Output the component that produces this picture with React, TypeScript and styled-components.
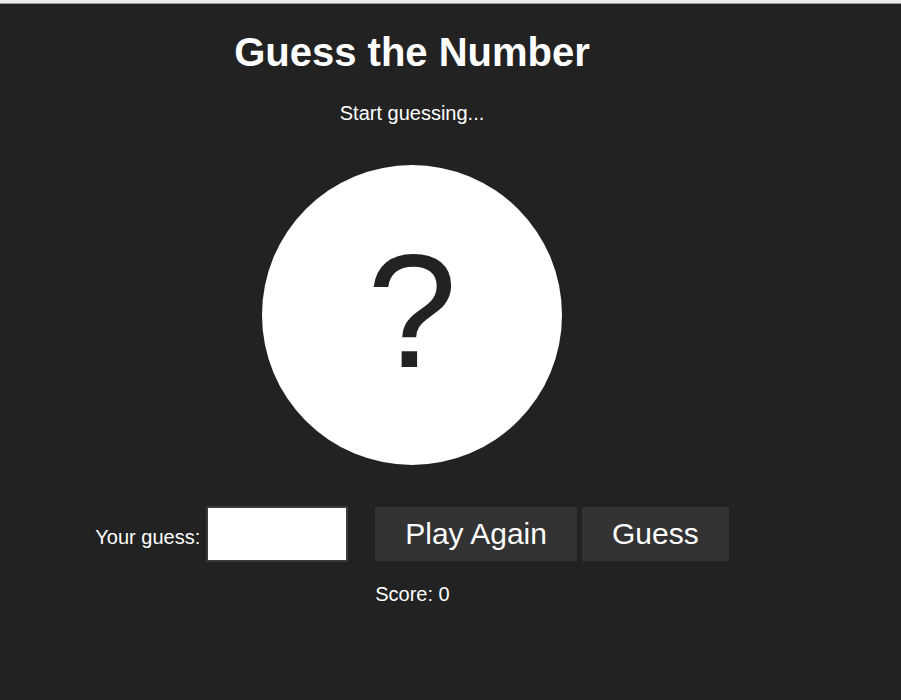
import React from "react";
import styled, { createGlobalStyle } from "styled-components";

const Global = createGlobalStyle`
  html, body {
    margin: 0;
    padding: 0;
    background: #222222;
    font-family: "Liberation Sans", Arial, sans-serif;
    color: #ffffff;
  }
`;

const TopBar = styled.div`
  height: 3px;
  background: #ececec;
  border-bottom: 1px solid #9a9a9a;
`;

const Page = styled.main`
  width: 824px;
  min-height: 696px;
  display: flex;
  flex-direction: column;
  align-items: center;
`;

const Title = styled.h1`
  margin: 25px 0 0;
  font-size: 40px;
  font-weight: bold;
  line-height: 46px;
`;

const Status = styled.p`
  margin: 26px 0 0;
  font-size: 20px;
  line-height: 24px;
`;

const Ball = styled.div`
  margin-top: 40px;
  box-sizing: border-box;
  width: 300px;
  height: 300px;
  padding-bottom: 9px;
  border-radius: 50%;
  background: #ffffff;
  color: #222222;
  display: flex;
  align-items: center;
  justify-content: center;
  font-size: 162px;
  line-height: 1;
`;

const Controls = styled.div`
  margin-top: 41px;
  display: flex;
  align-items: flex-start;
`;

const Label = styled.label`
  font-size: 20px;
  line-height: 24px;
  margin-top: 19px;
  margin-right: 6px;
`;

const Input = styled.input`
  box-sizing: border-box;
  width: 142px;
  height: 56px;
  border: 2px solid #3a3a3a;
  background: #ffffff;
  margin: 0 27px 0 0;
  padding: 0 6px;
  font-size: 24px;
  outline: none;
`;

const Side = styled.div`
  display: flex;
  flex-direction: column;
  align-items: flex-start;
  padding-top: 1px;
`;

const Buttons = styled.div`
  display: flex;
  gap: 5px;
`;

const Button = styled.button`
  height: 54px;
  padding: 0 30px;
  border: none;
  background: #333333;
  color: #ffffff;
  font-family: "Liberation Sans", Arial, sans-serif;
  font-size: 30px;
  cursor: pointer;
`;

const Score = styled.div`
  margin-top: 21px;
  font-size: 20px;
  line-height: 24px;
`;

export default function App() {
  return (
    <>
      <Global />
      <TopBar />
      <Page>
        <Title>Guess the Number</Title>
        <Status>Start guessing...</Status>
        <Ball>?</Ball>
        <Controls>
          <Label htmlFor="guess">Your guess:</Label>
          <Input id="guess" type="text" />
          <Side>
            <Buttons>
              <Button>Play Again</Button>
              <Button>Guess</Button>
            </Buttons>
            <Score>Score: 0</Score>
          </Side>
        </Controls>
      </Page>
    </>
  );
}
